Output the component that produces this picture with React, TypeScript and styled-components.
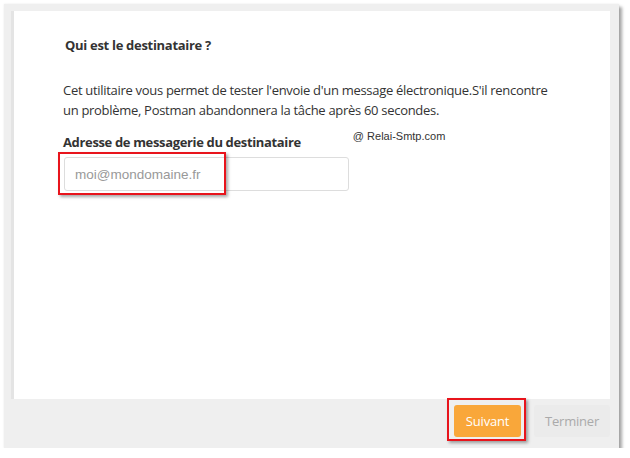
import React from "react";
import styled, { createGlobalStyle } from "styled-components";

const Global = createGlobalStyle`
  html, body { margin: 0; padding: 0; background: #ffffff; }
  body { font-family: "Open Sans", "Noto Sans", sans-serif; color: #333333; }
`;

const Window = styled.div`
  position: relative;
  box-sizing: border-box;
  margin: 4px 0 0 4px;
  width: 615px;
  height: 444px;
  background: #efefef;
  box-shadow: 3px 3px 3px rgba(0, 0, 0, 0.35), 0 0 2px rgba(0, 0, 0, 0.08);
  display: flex;
  flex-direction: column;
`;

const Content = styled.div`
  box-sizing: border-box;
  margin: 7px 9px 0 7px;
  height: 388px;
  background: #ffffff;
  border-left: 3px solid #e4e4e4;
  padding: 24px 0 0 49px;
`;

const Heading = styled.h2`
  margin: 0 0 0 2px;
  font-size: 13px;
  font-weight: 700;
  line-height: 20px;
  letter-spacing: -0.3px;
  color: #333333;
`;

const Paragraph = styled.p`
  margin: 25px 0 0 0;
  font-size: 13px;
  line-height: 20px;
  letter-spacing: -0.3px;
  color: #333333;
`;

const LabelRow = styled.div`
  display: flex;
  align-items: flex-start;
  margin-top: 12px;
`;

const Label = styled.label`
  font-size: 13px;
  font-weight: 700;
  line-height: 20px;
  letter-spacing: -0.35px;
  color: #333333;
`;

const Credit = styled.span`
  margin: -3px 0 0 52px;
  font-family: "Liberation Sans", Arial, sans-serif;
  font-size: 11px;
  line-height: 14px;
  color: #333333;
`;

const Field = styled.div`
  position: relative;
  margin: 5px 0 0 1px;
  width: 285px;
`;

const Input = styled.input`
  box-sizing: border-box;
  width: 100%;
  height: 34px;
  border: 1px solid #dddddd;
  border-radius: 3px;
  padding: 0 10px;
  font-family: "Liberation Sans", Arial, sans-serif;
  font-size: 13.5px;
  color: #555555;
  background: #ffffff;
  outline: none;
  &::placeholder { color: #999999; }
`;

const Highlight = styled.div<{ $l: number; $t: number; $w: number; $h: number }>`
  position: absolute;
  left: ${(p) => p.$l}px;
  top: ${(p) => p.$t}px;
  width: ${(p) => p.$w}px;
  height: ${(p) => p.$h}px;
  box-sizing: border-box;
  border: 2px solid #e8141c;
  box-shadow: 2px 2px 3px rgba(0, 0, 0, 0.35);
  pointer-events: none;
`;

const Footer = styled.div`
  position: relative;
  flex: 1;
  display: flex;
  justify-content: flex-end;
  align-items: flex-start;
  gap: 13px;
  padding: 6px 9px 0 0;
`;

const Button = styled.button<{ $primary?: boolean }>`
  height: 32px;
  border: none;
  border-radius: 3px;
  font-family: "Open Sans", "Noto Sans", sans-serif;
  font-size: 13px;
  letter-spacing: -0.2px;
  padding: 0;
  cursor: pointer;
  background: ${(p) => (p.$primary ? "#f9a73a" : "#ebebeb")};
  color: ${(p) => (p.$primary ? "#ffffff" : "#aaaaaa")};
  width: ${(p) => (p.$primary ? "67px" : "76px")};
`;

export default function App() {
  return (
    <>
      <Global />
      <Window>
        <Content>
          <Heading>Qui est le destinataire ?</Heading>
          <Paragraph>
            Cet utilitaire vous permet de tester l'envoie d'un message électronique.S'il rencontre
            <br />
            un problème, Postman abandonnera la tâche après 60 secondes.
          </Paragraph>
          <LabelRow>
            <Label htmlFor="dest">Adresse de messagerie du destinataire</Label>
            <Credit>@ Relai-Smtp.com</Credit>
          </LabelRow>
          <Field>
            <Input id="dest" placeholder="moi@mondomaine.fr" />
            <Highlight $l={-6} $t={-5} $w={168} $h={43} />
          </Field>
        </Content>
        <Footer>
          <Button $primary>Suivant</Button>
          <Button disabled>Terminer</Button>
          <Highlight $l={443} $t={-1} $w={79} $h={43} />
        </Footer>
      </Window>
    </>
  );
}
